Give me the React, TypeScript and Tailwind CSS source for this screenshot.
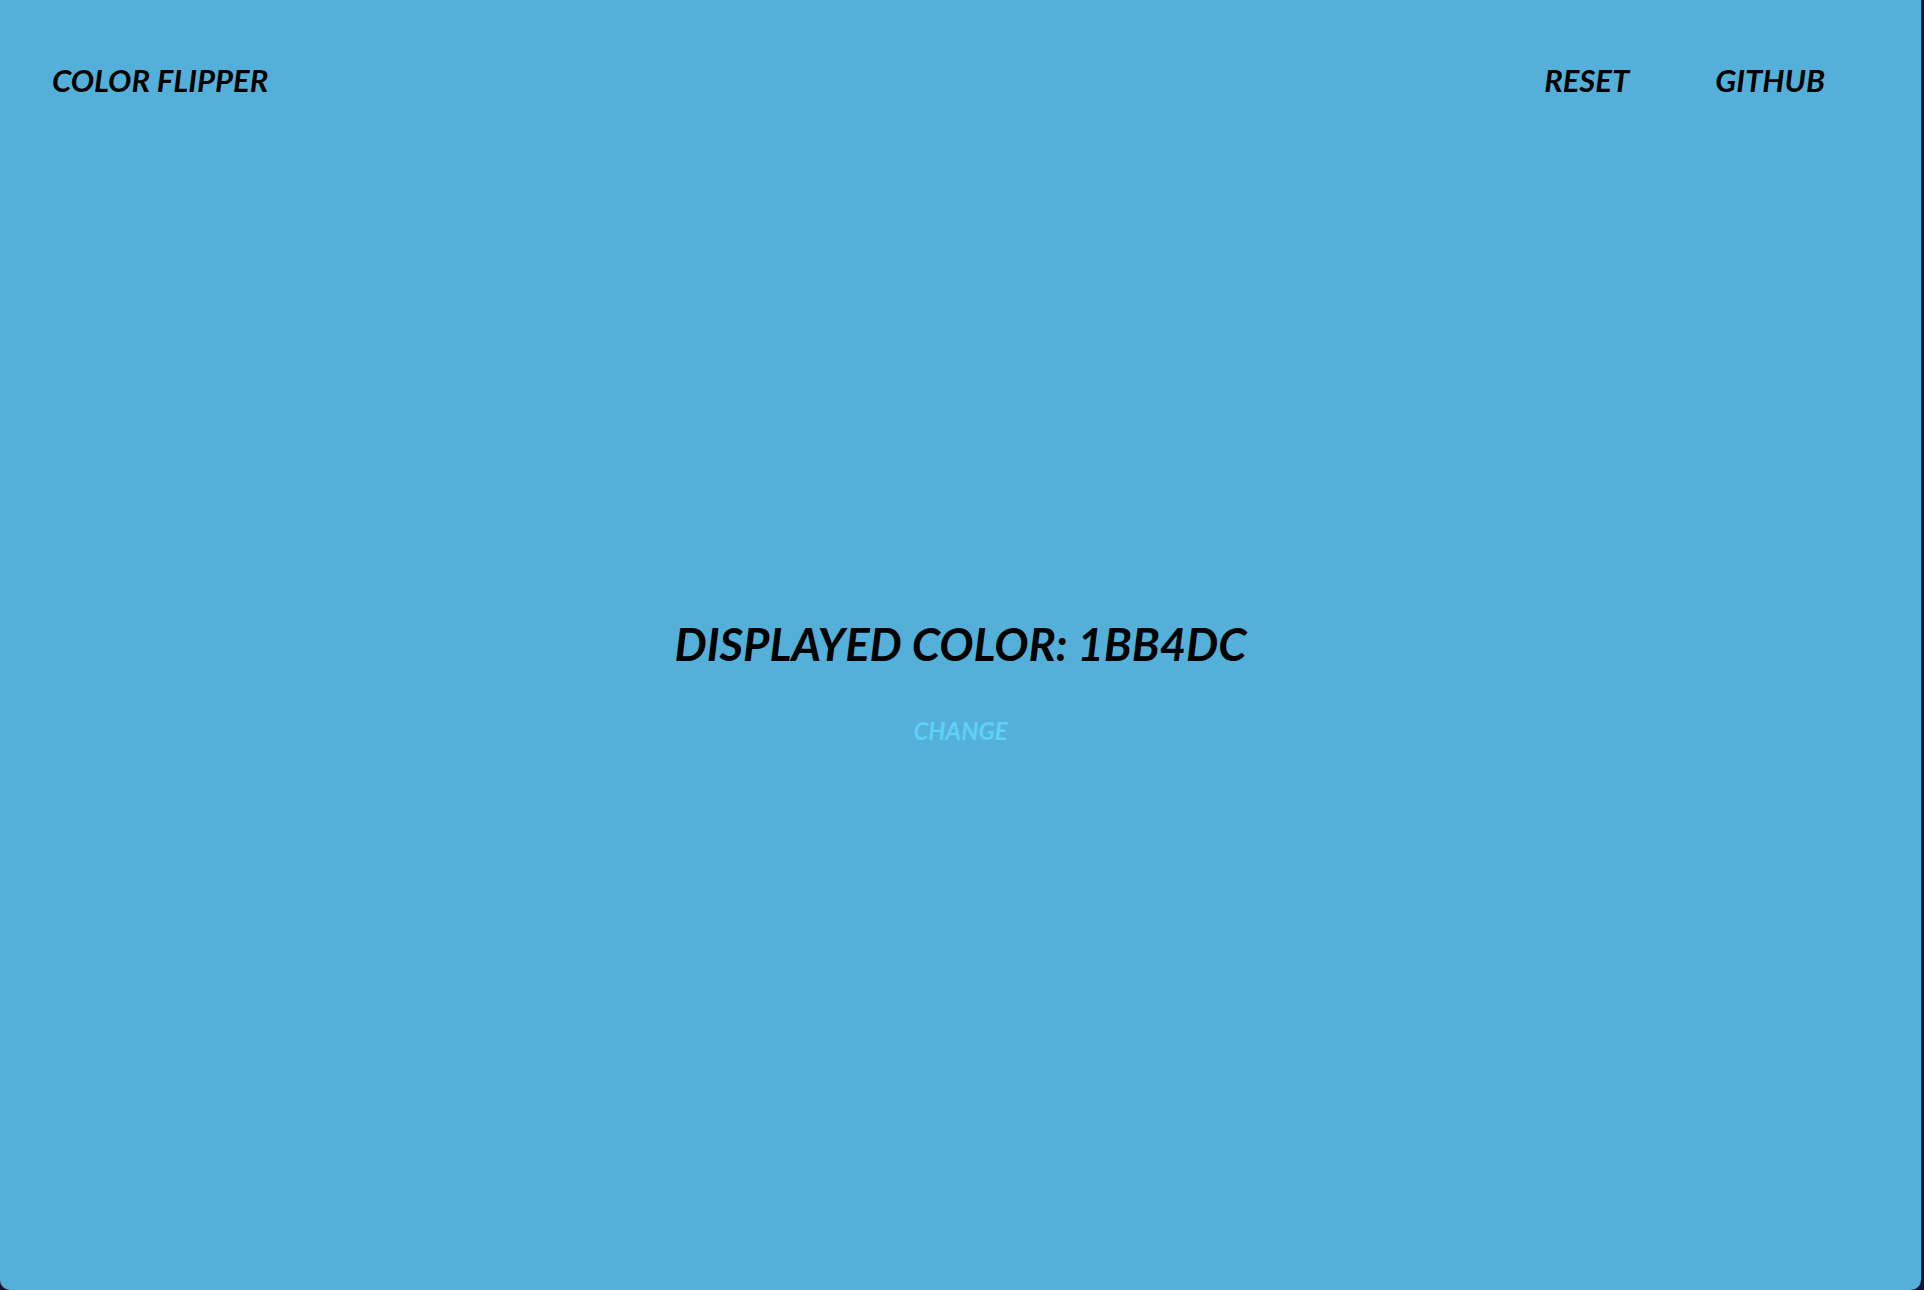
import { useState } from 'react'

const COLORS = ['#1BB4DC', '#F15025', '#2ECC71', '#9B59B6', '#F1C40F']

const App: React.FC = () => {
  const [index, setIndex] = useState(0)
  const hex = COLORS[index % COLORS.length]

  return (
    <div className="w-full h-[1290px] bg-[#1b1035] flex font-[Lato,'Open_Sans',sans-serif] italic font-bold text-black">
      <div className="w-[1921px] h-[1290px] rounded-b-[10px] bg-[#55b0d9] flex flex-col">
        <header className="h-[160px] flex items-center justify-between pl-[52px] pr-[96px]">
          <h1 className="text-[31px] leading-none">COLOR FLIPPER</h1>
          <nav className="flex items-center gap-[86px] text-[31px] leading-none">
            <button type="button" onClick={() => setIndex(0)} className="italic font-bold">
              RESET
            </button>
            <a href="#" className="block">
              GITHUB
            </a>
          </nav>
        </header>

        <main className="flex-1 flex flex-col items-center pt-[461px]">
          <h2 className="text-[45.5px] leading-none">
            DISPLAYED COLOR: {hex.slice(1)}
          </h2>
          <button
            type="button"
            onClick={() => setIndex(index + 1)}
            className="mt-[52px] text-[24px] leading-none italic font-bold text-[#5fd0f7]">
            CHANGE
          </button>
        </main>
      </div>
    </div>
  )
}

export default App
